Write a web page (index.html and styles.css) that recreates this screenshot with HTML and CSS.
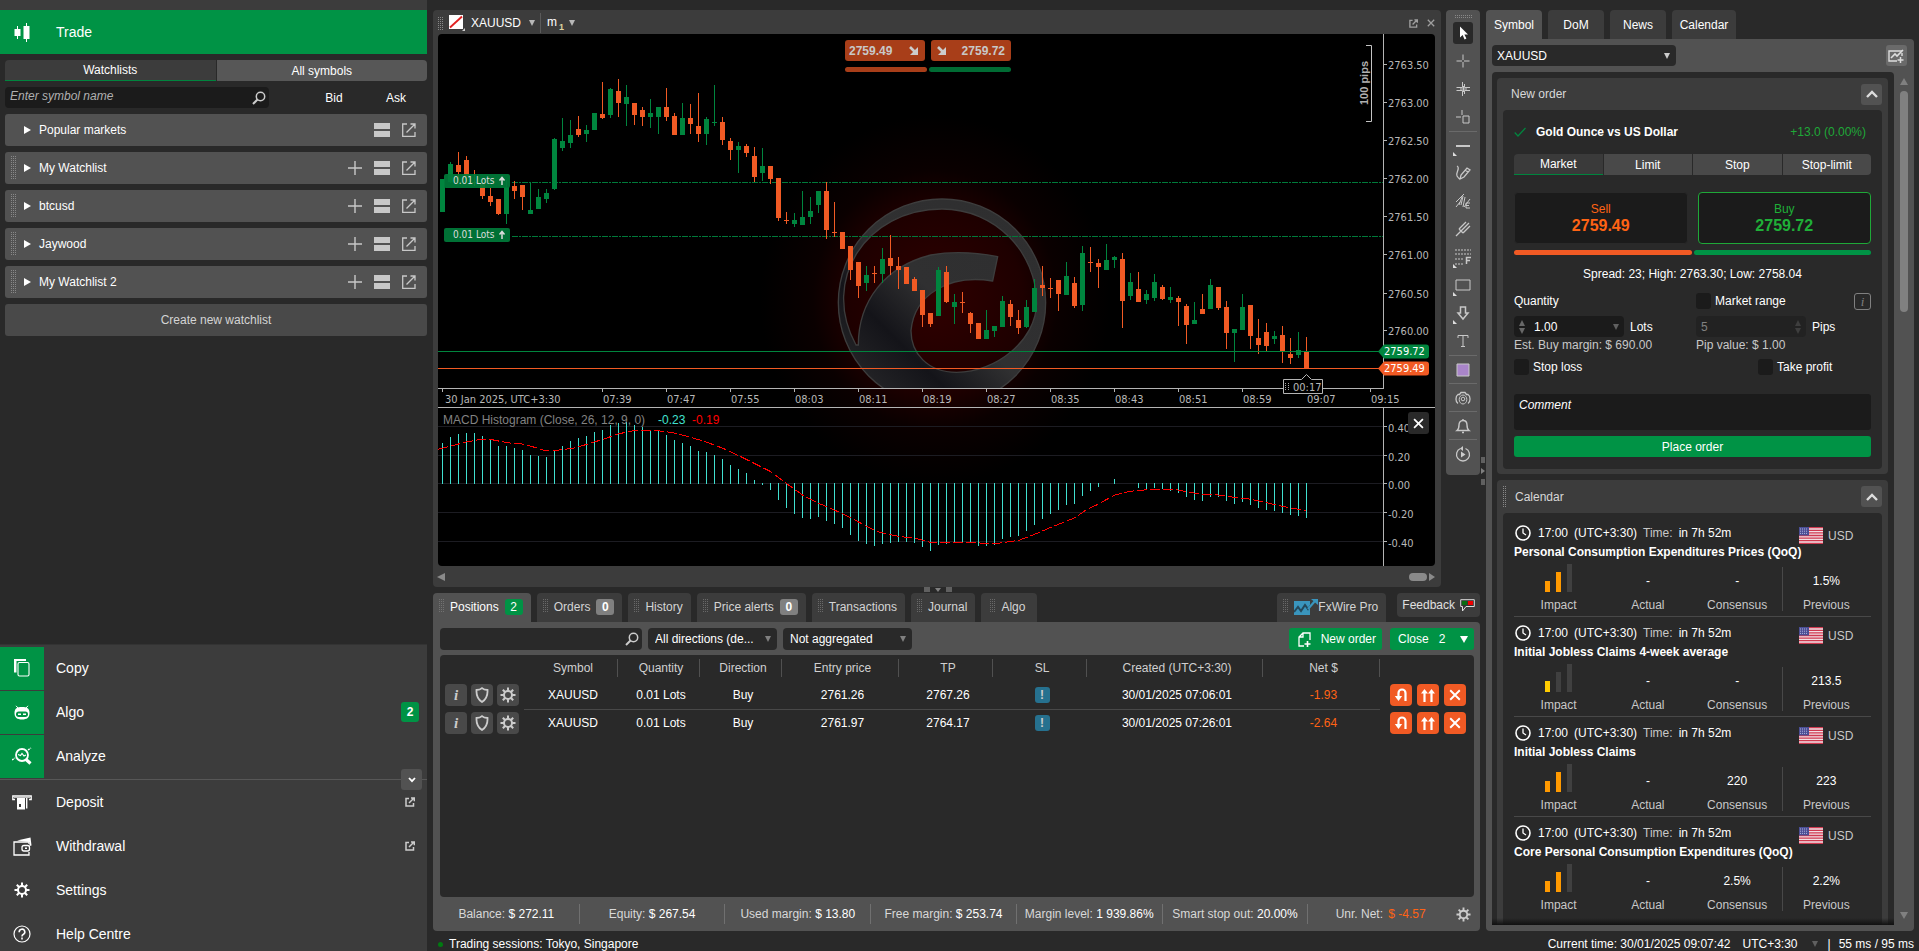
FILE: index.html
```html
<!DOCTYPE html>
<html lang="en">
<head>
<meta charset="utf-8">
<title>Trade</title>
<link rel="stylesheet" href="styles.css">
</head>
<body>
<svg class="defs" aria-hidden="true">
  <symbol id="i-search" viewBox="0 0 14 14"><circle cx="8.500" cy="5.500" r="4.200" fill="none" stroke="currentColor" stroke-width="1.500"/><path d="M5.500 8.500 1 13" stroke="currentColor" stroke-width="2"/></symbol>
  <symbol id="i-plus" viewBox="0 0 14 14"><path d="M7 0v14M0 7h14" stroke="currentColor" stroke-width="1.400"/></symbol>
  <symbol id="i-rows" viewBox="0 0 16 14"><path d="M0 0h16v6H0zM0 8h16v6H0z" fill="currentColor"/></symbol>
  <symbol id="i-out" viewBox="0 0 14 14"><path d="M5 1H.7v12.300H13V9M4.500 9.500 12.500 1.500M8.500 1H13v4.500" fill="none" stroke="currentColor" stroke-width="1.300"/></symbol>
  <symbol id="i-ext" viewBox="0 0 10 10"><path d="M4 1.500H1v7.500h7.500V6M4 6 8.500 1.500M6 1h3.300v3.300" fill="none" stroke="currentColor" stroke-width="1.500"/></symbol>
  <symbol id="i-x" viewBox="0 0 10 10"><path d="M1 1l8 8M9 1 1 9" stroke="currentColor" stroke-width="1.600" fill="none"/></symbol>
  <symbol id="i-up" viewBox="0 0 12 8"><path d="M1 7 6 2l5 5" fill="none" stroke="currentColor" stroke-width="2.400"/></symbol>
  <symbol id="i-gear" viewBox="0 0 16 16"><path d="M8 .5v15M.5 8h15M2.800 2.800l10.400 10.400M13.200 2.800 2.800 13.200" stroke="currentColor" stroke-width="2"/><circle cx="8" cy="8" r="4" fill="var(--hole,#3c3c3c)" stroke="currentColor" stroke-width="2"/></symbol>
  <symbol id="i-shield" viewBox="0 0 14 16"><path d="M7 1.200C5.500 2.600 3.500 3 1.500 3c-.3 5 .8 9 5.500 12 4.700-3 5.800-7 5.500-12-2 0-4-.4-5.500-1.800z" fill="none" stroke="currentColor" stroke-width="1.800"/></symbol>
  <symbol id="i-uturn" viewBox="0 0 14 14"><path d="M11.500 13V5a3.500 3.500 0 0 0-7 0v5" fill="none" stroke="currentColor" stroke-width="2.200"/><path d="M.8 8h7.400l-3.700 5z" fill="currentColor"/></symbol>
  <symbol id="i-upup" viewBox="0 0 14 14"><path d="M3.500 14V4M10.500 14V4" stroke="currentColor" stroke-width="2.200"/><path d="M0 5.500 3.500 1 7 5.500zM7 5.500 10.500 1 14 5.500z" fill="currentColor"/></symbol>
  <symbol id="i-clock" viewBox="0 0 16 16"><circle cx="8" cy="8" r="7" fill="none" stroke="currentColor" stroke-width="1.600"/><path d="M8 3.500V8l3 2" fill="none" stroke="currentColor" stroke-width="1.300"/></symbol>
  <symbol id="i-flag" viewBox="0 0 24 17"><path fill="#f1dfe3" d="M0 0h24v17H0z"/><path d="M0 .7h24M0 3.300h24M0 5.900h24M0 8.500h24M0 11.100h24M0 13.700h24M0 16.300h24" stroke="#cf3a50" stroke-width="1.300"/><path fill="#4a4e94" d="M0 0h10v8.500H0z"/><path d="M1 2h8M1 4.200h8M1 6.400h8" stroke="#aeb2dc" stroke-dasharray="1 1"/></symbol>
</svg>

<aside class="sidebar">
  <div class="trade-head">
    <svg width="16" height="20" viewBox="0 0 16 20"><path d="M3.500 4v13M12.500 1v19" stroke="#fff"/><path d="M.5 7h6v7h-6zM9.500 4h6v13h-6z" fill="#fff"/></svg>
    <span>Trade</span>
  </div>
  <div class="watch">
    <div class="seg"><button class="on">Watchlists</button><button>All symbols</button></div>
    <div class="find">
      <label class="find-box"><input type="text" placeholder="Enter symbol name" aria-label="Enter symbol name"><svg width="14" height="14"><use href="#i-search"/></svg></label>
      <span>Bid</span><span>Ask</span>
    </div>
    <div class="wl"><i class="tri"></i><b>Popular markets</b><button aria-label="View"><svg width="16" height="14"><use href="#i-rows"/></svg></button><button aria-label="Detach"><svg width="14" height="14"><use href="#i-out"/></svg></button></div>
    <div class="wl grip-row"><i class="tri"></i><b>My Watchlist</b><button aria-label="Add"><svg width="14" height="14"><use href="#i-plus"/></svg></button><button aria-label="View"><svg width="16" height="14"><use href="#i-rows"/></svg></button><button aria-label="Detach"><svg width="14" height="14"><use href="#i-out"/></svg></button></div>
    <div class="wl grip-row"><i class="tri"></i><b>btcusd</b><button aria-label="Add"><svg width="14" height="14"><use href="#i-plus"/></svg></button><button aria-label="View"><svg width="16" height="14"><use href="#i-rows"/></svg></button><button aria-label="Detach"><svg width="14" height="14"><use href="#i-out"/></svg></button></div>
    <div class="wl grip-row"><i class="tri"></i><b>Jaywood</b><button aria-label="Add"><svg width="14" height="14"><use href="#i-plus"/></svg></button><button aria-label="View"><svg width="16" height="14"><use href="#i-rows"/></svg></button><button aria-label="Detach"><svg width="14" height="14"><use href="#i-out"/></svg></button></div>
    <div class="wl grip-row"><i class="tri"></i><b>My Watchlist 2</b><button aria-label="Add"><svg width="14" height="14"><use href="#i-plus"/></svg></button><button aria-label="View"><svg width="16" height="14"><use href="#i-rows"/></svg></button><button aria-label="Detach"><svg width="14" height="14"><use href="#i-out"/></svg></button></div>
    <button class="create">Create new watchlist</button>
  </div>
  <nav class="nav">
    <a href="#copy" class="app"><span class="ic"><svg width="16" height="18" viewBox="0 0 16 18"><path d="M0 13.500V0h12v2H2.500v11.500z" fill="#fff"/><rect x="4" y="3.500" width="11" height="13.500" rx="1.500" fill="none" stroke="#fff" stroke-width="1.100"/></svg></span>Copy</a>
    <a href="#algo" class="app"><span class="ic"><svg width="16" height="15" viewBox="0 0 16 15"><path d="M2 .8 4 3M14 .8 12 3" stroke="#fff"/><path d="M8 2c5 0 7.500 1.500 7.500 6S13 14.500 8 14.500.5 12.500.5 8 3 2 8 2z" fill="#fff"/><rect x="2" y="6.500" width="12" height="5.500" rx="2.700" fill="#009345"/><path d="M4 9.200h3M9 9.200h3" stroke="#fff" stroke-width="1.400"/></svg></span>Algo<em class="badge">2</em></a>
    <a href="#analyze" class="app"><span class="ic"><svg width="20" height="18" viewBox="0 0 20 18"><circle cx="10" cy="8" r="6" fill="none" stroke="#fff" stroke-width="1.800"/><path d="M13.500 12l5 4.500" stroke="#fff" stroke-width="3.200"/><path d="M6 7.500l2.500 1 1.500-2 2 2.500 2-1" fill="none" stroke="#fff" stroke-width="1.200"/><path d="M0 13l3-2M16 3l3-2" stroke="#fff" stroke-width="1.400" stroke-dasharray="2 1"/></svg></span>Analyze</a>
    <div class="split"><button aria-label="Collapse menu"><svg width="8" height="6" viewBox="0 0 8 6"><path d="M1 1l3 3.200L7 1" fill="none" stroke="#fff" stroke-width="1.800"/></svg></button></div>
    <a href="#deposit"><span class="ic"><svg width="20" height="15" viewBox="0 0 20 15"><path d="M3 4.500H.8V1h18.400v3.500H17" fill="none" stroke="#fff" stroke-width="1.300"/><path d="M2 2.500h16" stroke="#bbb"/><path d="M5 3h8v11.500H5zM14 3h1.400v10.500H14z" fill="#fff"/><path d="M7 9h2v3H7z" fill="#3c3c3c"/></svg></span>Deposit<svg class="ext" width="10" height="10"><use href="#i-ext"/></svg></a>
    <a href="#withdrawal"><span class="ic"><svg width="19" height="19" viewBox="0 0 19 19"><path d="M4 3.500 17.500.5l1 8-2 .5V5z" fill="#fff"/><path d="M16 7V5H1v13h15v-3" fill="none" stroke="#fff" stroke-width="1.300"/><rect x="9" y="8.500" width="7.500" height="5.500" rx="2" fill="none" stroke="#fff" stroke-width="1.300"/><path d="M12 10.500h2v1.500h-2z" fill="#fff"/></svg></span>Withdrawal<svg class="ext" width="10" height="10"><use href="#i-ext"/></svg></a>
    <a href="#settings"><span class="ic"><svg width="16" height="16"><use href="#i-gear"/></svg></span>Settings</a>
    <a href="#help"><span class="ic"><svg width="18" height="18" viewBox="0 0 18 18"><circle cx="9" cy="9" r="8" fill="none" stroke="#fff" stroke-width="1.200"/><path d="M6.200 7.200a2.800 2.800 0 1 1 4 2.300c-.9.500-1.200.9-1.200 1.900M9 12.500v2" fill="none" stroke="#fff" stroke-width="1.600"/></svg></span>Help Centre</a>
  </nav>
</aside>

<div class="content">
  <div class="workspace">
    <main class="center">
      <div class="chart-row">
        <section class="chart-panel">
          <header class="chart-head">
            <i class="grip"></i>
            <button class="sym"><svg width="16" height="16" viewBox="0 0 16 16"><path fill="#fff" d="M0 0h14v14H0z"/><path d="M1 12.500 13 1.500" stroke="#e02020" stroke-width="1.800"/><path d="M16 13v3h-3z" fill="#ccc"/></svg>XAUUSD<i class="caret"></i></button>
            <button class="tf"><span>m</span><sub>1</sub><i class="caret"></i></button>
            <span class="grow"></span>
            <button class="dim" aria-label="Detach chart"><svg width="9" height="9"><use href="#i-ext"/></svg></button>
            <button class="dim" aria-label="Close chart"><svg width="8" height="8"><use href="#i-x"/></svg></button>
          </header>
          <div class="chart">
            <svg id="plot" viewBox="438 34 997 532" role="img" aria-label="XAUUSD one minute chart">
              <defs>
                <radialGradient id="glow"><stop offset="0" stop-color="#300000"/><stop offset=".5" stop-color="#1e0000"/><stop offset=".7" stop-color="#0a0000"/><stop offset="1" stop-color="#000"/></radialGradient>
                <linearGradient id="metal" x1="0" y1="1" x2="1" y2="0"><stop offset="0" stop-color="#2f2f30"/><stop offset=".3" stop-color="#141419"/><stop offset=".5" stop-color="#303031"/><stop offset="1" stop-color="#2e2e2f"/></linearGradient>
                <clipPath id="clipTop"><path d="M438 34h945v354H438z"/></clipPath>
              </defs>
              <ellipse cx="935" cy="300" rx="175" ry="185" fill="url(#glow)"/>
              <g clip-path="url(#clipTop)">
                <g transform="translate(800 180) scale(.3333)">
                  <path fill="url(#metal)" stroke="#3d3d3d" stroke-width="4" fill-rule="evenodd" d="M115 368a311 311 0 1 1 622 0a311 311 0 1 1-622 0zM168 495C60 300 200 87 426 87c160 0 284 130 284 283-2 110-120 207-240 207-90 0-137-60-137-125 10-110 115-170 245-149l15-73c-60-12-130-18-200-5-140 35-218 140-218 270z"/>
                </g>
              </g>
              <g stroke="#1c1c22" shape-rendering="crispEdges"><path d="M438 426.500h945M438 455.500h945M438 483.500h945M438 512.500h945M438 541.500h945"/></g>
              <g stroke="#007a3a" stroke-dasharray="6 1 2 1" shape-rendering="crispEdges"><path d="M512 182.500h871M512 236.500h871"/></g>
              <g id="candles" shape-rendering="crispEdges"></g>
              <g id="macd" fill="#40e0d0" shape-rendering="crispEdges"></g>
              <path id="signal" fill="none" stroke="#f00" stroke-dasharray="10 3" shape-rendering="crispEdges"/>
              <g shape-rendering="crispEdges">
                <path d="M438 351.500h942" stroke="#00853e"/><path d="M438 368.500h942" stroke="#f15a24"/>
                <path d="M438 388.500h945.500V34M438 407.500h997M1383.500 408v158" fill="none" stroke="#b4b4b4"/>
              </g>
              <g id="axis" fill="#b4b4b4" stroke="#b4b4b4"></g>
              <path d="M1366 45.500h5.500v76h-5.500" fill="none" stroke="#c4c4c4"/>
              <text class="pips" transform="translate(1368 83) rotate(-90)" text-anchor="middle">100 pips</text>
              <g fill="#007b3a" fill-opacity=".92"><rect x="444" y="174" width="66" height="14" rx="2"/><rect x="444" y="228" width="66" height="14" rx="2"/></g>
              <g class="lots"><text x="453" y="184">0.01 Lots</text><text x="453" y="238">0.01 Lots</text></g>
              <path d="M502 185v-7M499.500 180.500l2.500-3 2.500 3M502 239v-7M499.500 234.500l2.500-3 2.500 3" fill="none" stroke="#ddd" stroke-width="1.500"/>
              <path d="M1378 351.500l6-7h42q3 0 3 3v8q0 3-3 3h-42z" fill="#00853e"/>
              <path d="M1378 368.500l6-7h42q3 0 3 3v8q0 3-3 3h-42z" fill="#f15a24"/>
              <text class="tag" x="1384" y="355">2759.72</text><text class="tag" x="1384" y="372">2759.49</text>
              <path d="M1283.500 379.500h18l5-5 5 5h11v14h-39z" fill="#000" stroke="#b4b4b4"/>
              <path d="M1285.500 383v8M1288.500 383v8" stroke="#aaa" stroke-dasharray="1 1"/>
              <text class="ax" x="1293" y="391">00:17</text>
              <g class="ind"><text x="443" y="424" fill="#828282">MACD Histogram (Close, 26, 12, 9, 0)</text><text x="658" y="424" fill="#40e0d0">-0.23</text><text x="692" y="424" fill="#f00">-0.19</text></g>
            </svg>
            <div class="quick">
              <button>2759.49<svg width="9" height="9" viewBox="0 0 9 9"><path d="M1 1l5 5" stroke="#ccc" stroke-width="2.600"/><path d="M9 1v8H1z" fill="#ccc"/></svg></button>
              <button><svg width="9" height="9" viewBox="0 0 9 9"><path d="M1 1l5 5" stroke="#ccc" stroke-width="2.600"/><path d="M9 1v8H1z" fill="#ccc"/></svg>2759.72</button>
              <i class="sellbar"></i><i class="buybar"></i>
            </div>
            <button class="ind-close" aria-label="Remove indicator"><svg width="11" height="11"><use href="#i-x"/></svg></button>
          </div>
          <div class="hscroll"><i class="back"></i><span class="grow"></span><i class="thumb"></i><i class="fwd"></i></div>
          <div class="splitter"><i></i><b></b><i></i></div>
        </section>
        <aside class="tools">
          <i class="hgrip"></i>
          <button class="on" aria-label="Pointer"><svg viewBox="0 0 16 16"><path d="M5 1.500v11l2.600-2.400 2 4.400 1.800-.9-2-4.200H13z" fill="#fff"/></svg></button>
          <button aria-label="Crosshair"><svg viewBox="0 0 16 16"><path d="M8 1.500V7M8 9v5.500M1.500 8H7M9 8h5.500"/></svg></button>
          <button aria-label="Synced crosshair"><svg viewBox="0 0 16 16"><path d="M7.500 1v5.500H1.500M7.500 15V9.500H1.500M9.500 3v3.500h5.500M9.500 13V9.500h5.500M8.500 5v6M5 8h7"/></svg></button>
          <button aria-label="Magnet"><svg viewBox="0 0 16 16"><path d="M7 1v5M1 8h5M8 7h6v7H8z"/></svg></button>
          <button class="sep more" aria-label="Line"><svg viewBox="0 0 16 16"><path d="M1 8h14" stroke-width="2"/></svg></button>
          <button aria-label="Pencil"><svg viewBox="0 0 16 16"><path d="M2 1c4 2-2 7 0 10s2 3 3 3M5 14l1-4 6-7 3 2-6 7zM10 5l3 2" stroke-width="1.300"/></svg></button>
          <button aria-label="Elliott waves"><svg viewBox="0 0 16 16"><path d="M1 9 9 1M1 14l4-5M4 12l3-8M6 12l2-9M8 14l2-10M9 14l6-8M11 10h4M11 10v5h4M11 12.500h3"/></svg></button>
          <button aria-label="Pitchfork"><svg viewBox="0 0 16 16"><path d="M1 15l5-5M4 8l7-7M6 10l8-8M8 12l7-7M4 8l4 4" stroke-width="1.300"/></svg></button>
          <button class="more" aria-label="Fibonacci"><svg viewBox="0 0 16 16"><path d="M0 1h16M0 5h16M0 10h9M0 15h9" stroke-dasharray="2 1"/><path d="M11.500 15V8.500H16M11.500 11.500H15" stroke-width="1.500"/></svg></button>
          <button class="more" aria-label="Rectangle"><svg viewBox="0 0 16 16"><path d="M1 3h14v10H1z"/></svg></button>
          <button class="more" aria-label="Arrow"><svg viewBox="0 0 16 16"><path d="M5.500 2h5v6H13l-5 6-5-6h2.500z" stroke-width="1.500"/></svg></button>
          <button aria-label="Text"><svg viewBox="0 0 16 16"><path d="M3 5V2.500h10V5M8 2.500v11M6 13.500h4"/></svg></button>
          <button class="sep" aria-label="Colour"><svg viewBox="0 0 16 16"><path d="M2 2h12v12H2z" fill="#a985c9"/></svg></button>
          <button class="sep" aria-label="Snapshot"><svg viewBox="0 0 16 16"><path d="M3 13.500C.3 12 .3 6 3 4.500h1.500L6 2.500h4l1.500 2H13c2.700 1.500 2.700 7.500 0 9" stroke-width="1.300"/><ellipse cx="8" cy="9.500" rx="3.800" ry="4.500"/><circle cx="8" cy="9" r="1.800"/></svg></button>
          <button class="sep" aria-label="Alert"><svg viewBox="0 0 16 16"><path d="M8 1v1.500M2 12.500c2-1.500 2-3 2-5.500s1.500-4.500 4-4.500S12 4.500 12 7s0 4 2 5.500zM7 14.500h2" stroke-width="1.400"/></svg></button>
          <button class="sep" aria-label="Replay"><svg viewBox="0 0 16 16"><path d="M5.500 2.500A6.500 6.500 0 1 0 10.500 2.500" stroke-width="1.300"/><path d="M6 5.500v6l4.500-3zM8 0v5L5 2.500z" fill="#ccc" stroke="none"/></svg></button>
        </aside>
      </div>

      <section class="trades">
        <div class="tabs">
          <button class="tab on"><i class="grip"></i>Positions<em>2</em></button>
          <button class="tab"><i class="grip"></i>Orders<em>0</em></button>
          <button class="tab"><i class="grip"></i>History</button>
          <button class="tab"><i class="grip"></i>Price alerts<em>0</em></button>
          <button class="tab"><i class="grip"></i>Transactions</button>
          <button class="tab"><i class="grip"></i>Journal</button>
          <button class="tab wide"><i class="grip"></i>Algo</button>
          <span class="grow"></span>
          <button class="tab fx"><i class="grip"></i><svg width="24" height="16" viewBox="0 0 24 16"><path fill="#3a95bd" d="M0 2h16v14H0z"/><path d="M0 13l4-5 3 4 4-6 3 4 6-8" fill="none" stroke="#24485a" stroke-width="2"/><path d="M14 10l7-8" stroke="#3a95bd" stroke-width="2"/><path d="M17 0h7v6z" fill="#3a95bd"/></svg>FxWire Pro</button>
          <button class="feedback">Feedback<svg width="15" height="13" viewBox="0 0 15 13"><path d="M.7.700h13.600v6.800H6L2.500 12V7.500H.7z" fill="#333" stroke="#ddd"/><path fill="#0a6b10" d="M2 2h5v4H2z"/><path fill="#e00" d="M8 2h5v4H8z"/></svg></button>
        </div>
        <div class="trades-body">
          <div class="filters">
            <label class="dark-search"><input type="text" aria-label="Search positions"><svg width="14" height="14"><use href="#i-search"/></svg></label>
            <span class="sel"><select aria-label="Direction"><option>All directions (de...</option></select></span>
            <span class="sel"><select aria-label="Aggregation"><option>Not aggregated</option></select></span>
            <span class="grow"></span>
            <button class="green"><svg width="13" height="15" viewBox="0 0 13 15"><path d="M6 14H1V5l4-4h7v7M1 5h4V1" fill="none" stroke="#fff" stroke-width="1.300"/><path d="M9.500 9v6M6.500 12h6" stroke="#fff" stroke-width="1.600"/></svg>New order</button>
            <button class="green close"><span>Close</span><span>2</span><i class="caret"></i></button>
          </div>
          <div class="grid-box">
            <table>
              <colgroup><col class="c84"><col class="c94"><col class="c82"><col class="c82"><col class="c117"><col class="c94"><col class="c94"><col class="c176"><col class="c117"><col class="c94"></colgroup>
              <thead><tr><th class="nosep"></th><th>Symbol</th><th>Quantity</th><th>Direction</th><th>Entry price</th><th>TP</th><th>SL</th><th>Created (UTC+3:30)</th><th>Net $</th><th class="nosep"></th></tr></thead>
              <tbody>
                <tr><td><div class="acts"><button class="inf">i</button><button aria-label="Protect"><svg width="14" height="16"><use href="#i-shield"/></svg></button><button aria-label="Modify"><svg width="16" height="16"><use href="#i-gear"/></svg></button></div></td><td>XAUUSD</td><td>0.01 Lots</td><td>Buy</td><td>2761.26</td><td>2767.26</td><td><span class="warn">!</span></td><td>30/01/2025 07:06:01</td><td class="neg">-1.93</td><td><div class="acts red"><button aria-label="Reverse"><svg width="14" height="14"><use href="#i-uturn"/></svg></button><button aria-label="Double"><svg width="14" height="14"><use href="#i-upup"/></svg></button><button aria-label="Close"><svg width="12" height="12"><use href="#i-x"/></svg></button></div></td></tr>
                <tr><td><div class="acts"><button class="inf">i</button><button aria-label="Protect"><svg width="14" height="16"><use href="#i-shield"/></svg></button><button aria-label="Modify"><svg width="16" height="16"><use href="#i-gear"/></svg></button></div></td><td>XAUUSD</td><td>0.01 Lots</td><td>Buy</td><td>2761.97</td><td>2764.17</td><td><span class="warn">!</span></td><td>30/01/2025 07:26:01</td><td class="neg">-2.64</td><td><div class="acts red"><button aria-label="Reverse"><svg width="14" height="14"><use href="#i-uturn"/></svg></button><button aria-label="Double"><svg width="14" height="14"><use href="#i-upup"/></svg></button><button aria-label="Close"><svg width="12" height="12"><use href="#i-x"/></svg></button></div></td></tr>
              </tbody>
            </table>
          </div>
          <div class="account">
            <span>Balance: <b>$ 272.11</b></span><span>Equity: <b>$ 267.54</b></span><span>Used margin: <b>$ 13.80</b></span><span>Free margin: <b>$ 253.74</b></span><span>Margin level: <b>1 939.86%</b></span><span>Smart stop out: <b>20.00%</b></span><span>Unr. Net: <b class="neg">$ -4.57</b></span>
            <button aria-label="Account settings"><svg width="15" height="15"><use href="#i-gear"/></svg></button>
          </div>
        </div>
      </section>
    </main>

    <aside class="right">
      <div class="collapse"><i></i><b></b><i></i></div>
      <div class="rtabs"><button class="on">Symbol</button><button>DoM</button><button>News</button><button class="w">Calendar</button></div>
      <div class="rbody">
        <div class="rhead">
          <span class="sel big"><select aria-label="Symbol"><option>XAUUSD</option></select></span>
          <button aria-label="Add chart"><svg width="17" height="14" viewBox="0 0 17 14"><path d="M14 2H1v10h8M1 12l0 0M14 4v3" fill="none" stroke="#ddd" stroke-width="1.400"/><path d="M3 9l4-4 2 2 6-6" fill="none" stroke="#ddd" stroke-width="1.600"/><path d="M12.500 8v6M9.500 11h6" stroke="#ddd" stroke-width="1.500"/></svg></button>
        </div>
        <div class="rscroll">
          <div class="rlist">
            <section class="card">
              <header><h2>New order</h2><button aria-label="Collapse"><svg width="12" height="8"><use href="#i-up"/></svg></button></header>
              <form class="inner">
                <div class="name"><svg width="12" height="10" viewBox="0 0 12 10"><path d="M.7 5.500 4 9l7.500-8" fill="none" stroke="#00853e" stroke-width="1.200"/></svg><strong>Gold Ounce vs US Dollar</strong><span>+13.0 (0.00%)</span></div>
                <div class="modes"><button type="button" class="on">Market</button><button type="button">Limit</button><button type="button">Stop</button><button type="button">Stop-limit</button></div>
                <div class="prices"><button type="button" class="sell">Sell<b>2759.49</b></button><button type="button" class="buy">Buy<b>2759.72</b></button></div>
                <div class="depth"><i></i><i></i></div>
                <p class="spread">Spread: 23; High: 2763.30; Low: 2758.04</p>
                <div class="row two"><label for="qty">Quantity</label><div class="mr"><input type="checkbox" id="mr"><label for="mr">Market range</label><button type="button" class="info">i</button></div></div>
                <div class="row two fields">
                  <div><span class="num"><i class="spin"></i><input id="qty" type="text" value="1.00"><i class="caret"></i></span>Lots</div>
                  <div><span class="num off"><input id="rng" type="text" value="5" aria-label="Range" disabled><i class="spin"></i></span><label for="rng">Pips</label></div>
                </div>
                <div class="row two soft"><span>Est. Buy margin: $ 690.00</span><span>Pip value: $ 1.00</span></div>
                <div class="row stops"><div><input type="checkbox" id="sl"><label for="sl">Stop loss</label></div><div><input type="checkbox" id="tp"><label for="tp">Take profit</label></div></div>
                <textarea placeholder="Comment" aria-label="Comment"></textarea>
                <button type="button" class="place">Place order</button>
              </form>
            </section>
            <section class="card cal">
              <header><i class="grip"></i><h2>Calendar</h2><button aria-label="Collapse"><svg width="12" height="8"><use href="#i-up"/></svg></button></header>
              <div class="inner" id="events">
                <article class="ev"><div class="when"><svg width="16" height="16"><use href="#i-clock"/></svg><span>17:00</span><span>(UTC+3:30)</span><span class="t">Time:</span><span>in 7h 52m</span><span class="cur"><svg width="24" height="17"><use href="#i-flag"/></svg>USD</span></div><h3>Personal Consumption Expenditures Prices (QoQ)</h3><div class="cells"><div><div class="v bars mid"><i></i><i></i><i></i></div>Impact</div><div><div class="v">-</div>Actual</div><div><div class="v">-</div>Consensus</div><div><div class="v">1.5%</div>Previous</div></div></article>
                <article class="ev"><div class="when"><svg width="16" height="16"><use href="#i-clock"/></svg><span>17:00</span><span>(UTC+3:30)</span><span class="t">Time:</span><span>in 7h 52m</span><span class="cur"><svg width="24" height="17"><use href="#i-flag"/></svg>USD</span></div><h3>Initial Jobless Claims 4-week average</h3><div class="cells"><div><div class="v bars low"><i></i><i></i><i></i></div>Impact</div><div><div class="v">-</div>Actual</div><div><div class="v">-</div>Consensus</div><div><div class="v">213.5</div>Previous</div></div></article>
                <article class="ev"><div class="when"><svg width="16" height="16"><use href="#i-clock"/></svg><span>17:00</span><span>(UTC+3:30)</span><span class="t">Time:</span><span>in 7h 52m</span><span class="cur"><svg width="24" height="17"><use href="#i-flag"/></svg>USD</span></div><h3>Initial Jobless Claims</h3><div class="cells"><div><div class="v bars mid"><i></i><i></i><i></i></div>Impact</div><div><div class="v">-</div>Actual</div><div><div class="v">220</div>Consensus</div><div><div class="v">223</div>Previous</div></div></article>
                <article class="ev last"><div class="when"><svg width="16" height="16"><use href="#i-clock"/></svg><span>17:00</span><span>(UTC+3:30)</span><span class="t">Time:</span><span>in 7h 52m</span><span class="cur"><svg width="24" height="17"><use href="#i-flag"/></svg>USD</span></div><h3>Core Personal Consumption Expenditures (QoQ)</h3><div class="cells"><div><div class="v bars mid"><i></i><i></i><i></i></div>Impact</div><div><div class="v">-</div>Actual</div><div><div class="v">2.5%</div>Consensus</div><div><div class="v">2.2%</div>Previous</div></div></article>
              </div>
            </section>
          </div>
          <div class="vscroll"><i class="up"></i><i class="thumb"></i><i class="down"></i></div>
        </div>
      </div>
    </aside>
  </div>
  <footer class="foot"><i class="dot"></i><span>Trading sessions: Tokyo, Singapore</span><span class="grow"></span><span>Current time: 30/01/2025 09:07:42</span><span class="tz">UTC+3:30</span><i class="caret"></i><span class="bar">|</span><span>55 ms / 95 ms</span></footer>
</div>
<script src="chart.js"></script>
</body>
</html>
```
FILE: chart.js
```js
// Levels are stored in ticks, three ticks per chart unit.
// Each candle: high, body top, body bottom, low, and 1 for rising or 0 for falling.
const candles = [
[537,537,636,636,1],[486,491,547,550,1],[456,495,516,540,0],[468,480,528,540,0],[510,546,549,558,0],
[550,552,588,597,0],[564,588,606,618,0],[597,597,642,645,0],[540,560,642,672,1],[543,558,573,597,0],
[555,555,591,630,0],[549,630,642,642,1],[567,591,627,627,1],[567,579,597,609,1],[414,417,567,570,1],
[354,423,444,453,1],[360,405,429,444,1],[348,387,405,411,0],[375,390,402,426,1],[339,339,390,390,1],
[246,342,354,357,0],[264,267,345,354,1],[237,273,309,351,0],[255,291,312,378,1],[309,309,345,375,0],
[321,330,351,378,0],[297,339,351,384,1],[321,321,351,402,1],[264,321,351,363,0],[339,348,405,405,0],
[309,354,405,405,1],[312,354,372,402,0],[279,378,402,426,0],[351,357,402,435,1],[255,366,369,378,1],
[351,366,420,435,0],[414,423,450,480,0],[426,438,450,519,1],[432,438,459,471,0],[441,468,531,546,0],
[444,498,519,543,1],[498,498,537,552,0],[534,534,654,663,0],[636,660,663,672,0],[639,660,672,681,1],
[573,651,675,675,1],[591,633,651,672,1],[573,573,615,639,1],[546,573,690,717,0],[606,696,699,711,0],
[696,696,747,747,0],[738,738,810,840,0],[786,786,858,894,0],[798,825,849,873,1],[798,819,822,849,0],
[744,777,822,849,1],[705,774,798,825,0],[771,798,810,867,0],[801,801,852,852,0],[831,837,873,873,0],
[870,870,945,981,0],[939,939,972,981,0],[801,810,948,948,1],[798,816,906,908,0],[882,906,920,971,1],
[877,906,909,938,0],[936,939,971,998,0],[969,969,1017,1017,0],[930,990,1017,1017,1],[978,978,993,1010,1],
[888,903,980,980,1],[900,912,950,978,0],[930,960,984,1001,0],[900,921,980,983,1],[837,864,935,935,1],
[798,855,864,888,0],[834,864,867,894,0],[840,840,882,933,0],[786,828,885,885,1],[831,849,918,923,0],
[738,759,915,933,1],[741,786,789,816,0],[777,789,801,864,0],[732,780,809,809,1],[768,771,780,804,1],
[759,777,903,984,0],[819,846,888,900,1],[816,867,906,906,0],[870,882,900,912,1],[822,846,894,903,1],
[855,861,897,900,0],[861,891,900,909,1],[888,894,906,978,0],[912,918,975,1032,0],[906,960,971,971,1],
[882,927,941,941,0],[837,855,927,927,1],[861,861,924,930,0],[903,921,999,1047,0],[987,987,999,1086,1],
[882,921,990,990,1],[915,915,1008,1047,0],[957,1014,1035,1062,0],[969,996,1038,1053,0],[993,1008,1018,1032,1],
[978,1005,1054,1089,0],[1014,1062,1074,1092,0],[996,1050,1064,1074,1],[1011,1056,1105,1105,0]];

// End of each histogram bar in ticks; the zero line is at 311.
const macd = [189,171,162,159,159,168,180,198,198,204,210,225,228,231,213,198,183,174,168,156,150,135,129,126,135,
141,150,153,165,180,189,198,213,216,225,237,255,267,279,300,315,330,360,384,402,414,417,411,423,432,444,465,483,
492,498,492,489,486,486,489,501,513,495,492,486,489,487,498,498,495,477,471,468,453,435,417,402,390,375,372,348,
333,321,311,297,311,311,324,327,324,327,333,339,351,360,363,351,351,363,372,366,375,384,390,393,399,405,408,414];

const signal = [[438,208],[450,199],[466,186],[483,177],[492,179],[507,188],[525,193],[543,210],[554,212],[573,205],
[588,192],[603,178],[618,162],[633,152],[658,152],[673,158],[690,171],[707,187],[723,205],[740,229],[753,248],
[770,274],[790,318],[803,346],[818,369],[835,391],[852,415],[867,440],[880,457],[897,468],[917,476],[932,488],
[970,487],[984,490],[998,490],[1019,481],[1037,460],[1051,442],[1075,413],[1087,388],[1098,373],[1114,346],
[1130,334],[1144,330],[1162,327],[1176,329],[1201,343],[1216,344],[1234,352],[1248,356],[1262,365],[1284,380],[1306,392]];

const NS = 'http://www.w3.org/2000/svg';
const up = '#00853e', down = '#f15a24';
const px = ticks => Math.round(ticks / 3);

function add(parent, name, attrs, text) {
  const el = document.createElementNS(NS, name);
  for (const key in attrs) el.setAttribute(key, attrs[key]);
  if (text) el.textContent = text;
  parent.appendChild(el);
}

const candleLayer = document.getElementById('candles');
candles.forEach(([high, top, bottom, low, rising], i) => {
  const x = 440 + i * 8, fill = rising ? up : down;
  add(candleLayer, 'rect', { x: x + 2, y: px(high), width: 1, height: px(low) - px(high), fill });
  add(candleLayer, 'rect', { x, y: px(top), width: 5, height: Math.max(1, px(bottom) - px(top)), fill });
});

const macdLayer = document.getElementById('macd');
macd.forEach((end, i) => {
  if (end === 311) return;
  const y1 = Math.min(end, end < 311 ? end : 309), y2 = Math.max(end, 311);
  add(macdLayer, 'rect', { x: 442 + i * 8, y: 380 + px(y1), width: 1, height: px(y2) - px(y1) });
});

document.getElementById('signal').setAttribute('d',
  'M' + signal.map(([x, t]) => x + ' ' + (380 + t / 3).toFixed(1)).join('L'));

const axis = document.getElementById('axis');
const label = (x, y, text) => add(axis, 'text', { x, y, class: 'ax' }, text);
const tick = d => add(axis, 'path', { d, 'shape-rendering': 'crispEdges' });

for (let i = 0; i < 8; i++) {
  const y = 64 + i * 38 + (i > 5 ? 1 : 0);
  if (i === 7) { tick('M1384 330.5h3'); label(1388, 335, '2760.00'); continue; }
  tick(`M1384 ${y + .5}h3`);
  label(1388, y + 5, (2763.5 - i * .5).toFixed(2));
}
[['0.40', 426], ['0.20', 455], ['0.00', 483], ['-0.20', 512], ['-0.40', 541]].forEach(([text, y]) => {
  tick(`M1384 ${y + .5}h3`);
  label(1388, y + 6, text);
});
tick('M442.5 389v3');
label(445, 403, '30 Jan 2025, UTC+3:30');
for (let i = 0; i < 13; i++) {
  const x = 602 + i * 64, m = 39 + i * 8;
  if (i !== 11) tick(`M${x + .5} 389v3`);
  label(x + 1, 403, `${String(7 + Math.floor(m / 60)).padStart(2, '0')}:${String(m % 60).padStart(2, '0')}`);
}
```
FILE: styles.css
```css
* { box-sizing: border-box; }
html, body { height: 100%; }
body {
  margin: 0; display: flex; overflow: hidden; background: #292929; color: #fff;
  font: 12px/16px "Liberation Sans", Arial, sans-serif;
}
button, input, select, textarea { font: inherit; color: inherit; border: 0; padding: 0; margin: 0; background: none; }
button { display: flex; align-items: center; justify-content: center; }
input, textarea { outline: 0; min-width: 0; }
svg { flex: none; display: block; }
i, em { font-style: normal; }
b { font-weight: normal; }
a { color: inherit; text-decoration: none; }
h2, h3, p { margin: 0; font: inherit; }
.defs { position: absolute; width: 0; height: 0; }
.grow { flex: 1; }
.grip, .hgrip, .grip-row::before {
  background:
    repeating-linear-gradient(transparent 0 1px, var(--bg, #3c3c3c) 1px 2px),
    repeating-linear-gradient(90deg, #888 0 1px, transparent 1px 2px);
}
.grip { width: 5px; height: 13px; }
.caret { width: 0; height: 0; border: 3px solid transparent; border-top: 6px solid #b8b8b8; border-bottom: 0; }
.neg { color: #ff6314; }

/* sidebar */
.sidebar { width: 427px; flex: none; display: flex; flex-direction: column; border-top: 10px solid #3c3c3c; overflow: hidden; }
.trade-head { height: 44px; flex: none; display: flex; align-items: center; gap: 26px; padding-left: 14px; background: #009345; font-size: 14px; }
.watch { flex: 1; display: flex; flex-direction: column; gap: 6px; padding: 6px 0 0 5px; }
.seg { display: flex; gap: 1px; height: 21px; }
.seg button { flex: 1; background: #575757; border-radius: 0 4px 4px 0; }
.seg .on { background: #3c3c3c; border-bottom: 1px solid #00853e; border-radius: 4px 0 0 0; }
.find { display: flex; height: 21px; align-items: center; }
.find-box { width: 264px; height: 21px; display: flex; align-items: center; padding: 0 3px 0 5px; background: #1b1b1b; border-radius: 4px; color: #ccc; }
.find-box input { flex: 1; font-style: italic; height: 18px; align-self: flex-start; }
.find-box input::placeholder { color: #b0b0b0; opacity: 1; }
.find > span { width: 62px; text-align: center; }
.find > span:nth-child(2) { margin-left: 34px; }
.wl { --bg: #525252; height: 32px; display: flex; align-items: center; padding: 0 10px 0 19px; background: #525252; border-radius: 3px; position: relative; }
.wl b { flex: 1; }
.wl button { width: 16px; margin-left: 11px; color: #c8c8c8; }
.tri { border: 4px solid transparent; border-left: 7px solid #fff; border-right: 0; margin-right: 8px; }
.grip-row::before { content: ""; position: absolute; left: 6px; top: 4px; width: 5px; height: 24px; }
.create { height: 32px; background: #494949; border-radius: 3px; color: #d4d4d4; }
.nav { flex: none; background: #3c3c3c; padding-top: 1px; margin-bottom: -5px; font-size: 14px; border-top: 1px solid #333; }
.nav a { height: 44px; display: flex; align-items: center; padding-right: 12px; }
.ic { width: 44px; height: 44px; margin-right: 12px; display: flex; align-items: center; justify-content: center; }
.app .ic { background: #009345; height: 43px; }
.badge { margin: 0 -4px 0 auto; width: 18px; height: 20px; border-radius: 3px; background: #009345; font: bold 12px/20px "Liberation Sans", Arial, sans-serif; text-align: center; }
.ext { margin-left: auto; color: #ccc; }
.split { height: 2px; border-bottom: 1px solid #575757; position: relative; }
.split button { position: absolute; right: 5px; top: -9px; width: 21px; height: 21px; background: #525252; border-radius: 3px; }

/* frame */
.content { flex: 1; min-width: 0; display: flex; flex-direction: column; }
.workspace { flex: 1; min-height: 0; display: flex; gap: 6px; padding: 10px 5px 0 6px; }
.center { flex: 1; min-width: 0; display: flex; flex-direction: column; gap: 6px; }
.chart-row { flex: 1; min-height: 0; display: flex; gap: 5px; align-items: flex-start; }
.chart-panel { flex: 1; height: 100%; display: flex; flex-direction: column; background: #3c3c3c; border-radius: 4px; position: relative; }
.chart-head { height: 24px; flex: none; display: flex; align-items: center; padding: 2px 6px 0 5px; }
.chart-head button { height: 20px; }
.sym { gap: 6px; padding: 0 5px 0 6px; }
.sym .caret { margin-left: 2px; }
.tf { padding-left: 6px; border-left: 1px solid #5a5a5a; gap: 2px; }
.tf span { margin-top: -3px; }
.tf sub { font: bold 9px/10px "Liberation Sans", Arial, sans-serif; color: #ddd3a0; padding-top: 8px; }
.tf .caret { margin-left: 3px; }
.dim { color: #a0a0a0; margin-left: 9px; }
.chart { flex: 1; min-height: 0; margin: 0 6px 0 5px; background: #000; border-radius: 4px; position: relative; overflow: hidden; }
#plot { width: 100%; height: 100%; }
.ax { font: 11px "DejaVu Sans Condensed", "Noto Sans", sans-serif; stroke: none; fill: #b8b8b8; }
.tag { font: 11px "DejaVu Sans Condensed", "Noto Sans", sans-serif; fill: #fff; }
.lots { font: 10px "DejaVu Sans Condensed", "Noto Sans", sans-serif; fill: #dcdcdc; }
.pips { font: bold 11px "Liberation Sans", Arial, sans-serif; fill: #b0b0b0; }
.ind { font: 12px "Liberation Sans", Arial, sans-serif; }
.quick { position: absolute; top: 6px; left: 407px; width: 166px; display: grid; grid-template-columns: 1fr 1fr; column-gap: 6px; row-gap: 6px; }
.quick button { height: 21px; background: #a83e19; border-radius: 3px; color: #c8c8c8; font-weight: bold; justify-content: space-between; padding: 0 7px 0 4px; }
.quick button + button { padding: 0 6px 0 6px; }
.quick i { height: 5px; border-radius: 3px; }
.sellbar { background: #a83e19; margin-right: -2px; }
.buybar { background: #006b33; margin-left: -2px; }
.ind-close { position: absolute; right: 6px; top: 378px; width: 21px; height: 22px; background: #292929; border-radius: 3px; }
.hscroll { height: 21px; flex: none; display: flex; align-items: center; gap: 2px; padding: 0 6px 0 4px; }
.hscroll .back { border: 4px solid transparent; border-right: 8px solid #8a8a8a; border-left: 0; }
.hscroll .fwd { border: 4px solid transparent; border-left: 6px solid #8a8a8a; border-right: 0; }
.hscroll .thumb { width: 18px; height: 8px; border-radius: 4px; background: #8a8a8a; }
.splitter { position: absolute; left: 491px; bottom: -5px; display: flex; gap: 5px; align-items: center; }
.splitter i { width: 6px; height: 5px; background: #606060; }
.splitter b { border: 3px solid transparent; border-top: 4px solid #808080; border-bottom: 0; }
.tools { --bg: #525252; width: 34px; background: #525252; border-radius: 4px; padding: 0 3px 8px; display: flex; flex-direction: column; align-items: center; }
.hgrip { width: 17px; height: 4px; margin: 5px 0 0; }
.tools button { width: 28px; height: 28px; position: relative; }
.tools button.on::before { content: ""; position: absolute; inset: 3px 4px; background: #292929; border-radius: 3px; }
.tools svg { width: 16px; height: 16px; fill: none; stroke: #c8c8c8; stroke-width: 1; position: relative; }
.tools .on svg { stroke: none; }
.tools .sep { border-top: 1px solid #6a6a6a; }
.tools .more::after { content: ""; position: absolute; left: 4px; bottom: 3px; border: 2px solid #ddd; border-top-color: transparent; border-right-color: transparent; }

/* trades */
.trades { flex: none; display: flex; flex-direction: column; height: 338px; }
.tabs { display: flex; gap: 6px; height: 29px; align-items: flex-end; }
.tab { height: 29px; background: #3c3c3c; color: #d4d4d4; border-radius: 4px 4px 0 0; padding: 0 8px 2px 6px; }
.tab .grip { margin: 0 6px 2px 0; opacity: .6; }
.tab.on { --bg: #525252; background: #525252; color: #fff; }
.tab em { width: 18px; height: 16px; border-radius: 3px; background: #808080; color: #fff; font-weight: bold; margin-left: 6px; text-align: center; }
.tab.on em { background: #009345; font-weight: normal; }
.tab.wide { padding: 0 12px 2px 9px; }
.tab.fx { margin-right: 5px; }
.feedback { align-self: flex-start; height: 24px; padding: 0 5px; gap: 5px; background: #3c3c3c; color: #e0e0e0; border-radius: 4px; }
.trades-body { flex: 1; background: #525252; border-radius: 0 4px 4px 4px; display: flex; flex-direction: column; }
.filters { display: flex; gap: 6px; padding: 6px 6px 5px 7px; }
.dark-search { width: 202px; height: 22px; display: flex; align-items: center; padding: 0 3px; background: #292929; border-radius: 4px; color: #ccc; }
.dark-search input { flex: 1; }
.sel { position: relative; width: 129px; height: 22px; }
.sel select { appearance: none; width: 100%; height: 100%; background: #292929; border-radius: 4px; padding: 0 7px; outline: 0; }
.sel::after { content: ""; position: absolute; right: 6px; top: 8px; border: 3px solid transparent; border-top: 6px solid #808080; border-bottom: 0; }
.sel.big { width: 184px; height: 21px; }
.sel.big select { padding: 0 5px; }
.sel.big::after { border-top-color: #ccc; }
.green { height: 22px; background: #009345; border-radius: 3px; gap: 10px; padding: 0 6px 0 9px; }
.green.close { margin-left: 2px; width: 84px; padding: 0 6px 0 8px; gap: 10px; }
.green .caret { margin-left: auto; border-width: 7px 4px 0; border-top-color: #fff; }
.grid-box { flex: 1; margin: 0 6px 0 7px; background: #292929; border-radius: 4px; overflow: hidden; }
table { width: 100%; table-layout: fixed; border-collapse: collapse; }
.c84 { width: 84px; } .c94 { width: 94px; } .c82 { width: 82px; } .c117 { width: 117px; } .c176 { width: 176px; }
th, td { padding: 0 0 0 4px; text-align: center; font-weight: normal; }
th { height: 26px; color: #d0d0d0; position: relative; }
th::after { content: ""; position: absolute; right: 0; top: 4px; width: 1px; height: 18px; background: #505050; }
.nosep::after { content: none; }
td { height: 28px; }
td:first-child, td:last-child { padding: 0; }
tr + tr td:not(:first-child):not(:last-child) { border-top: 1px solid #484848; }
.acts { --hole: #494949; display: flex; gap: 4px; padding-left: 5px; }
.acts button { width: 22px; height: 22px; background: #494949; border-radius: 4px; color: #ccc; }
.acts .inf { font: italic bold 15px/20px "Liberation Serif", serif; }
.acts.red { gap: 5px; padding-left: 10px; }
.acts.red button { background: #f15a24; color: #fff; }
.warn { display: block; width: 15px; height: 16px; margin: 0 auto; border-radius: 3px; background: #26718f; color: #ccc; font-weight: bold; }
.account { height: 34px; display: flex; align-items: center; color: #d8d8d8; }
.account span { flex: 1; text-align: center; border-left: 1px solid #707070; line-height: 20px; white-space: nowrap; }
.account span:first-child { border-left-color: transparent; }
.account b { color: #fff; }
.account .neg { color: #ff6314; margin-left: 2px; }
.account button { --hole: #525252; width: 27px; color: #ccc; padding-right: 6px; }

/* right panel */
.right { width: 428px; flex: none; display: flex; flex-direction: column; position: relative; }
.collapse { position: absolute; left: -5px; top: 447px; display: flex; flex-direction: column; gap: 5px; }
.collapse i { width: 4px; height: 6px; background: #606060; }
.collapse b { border: 3px solid transparent; border-left: 4px solid #808080; border-right: 0; }
.rtabs { display: flex; gap: 6px; height: 29px; flex: none; }
.rtabs button { width: 56px; background: #3c3c3c; border-radius: 4px 4px 0 0; }
.rtabs .on { background: #525252; }
.rtabs .w { width: 64px; }
.rbody { flex: 1; min-height: 0; background: #525252; border-radius: 0 4px 4px 4px; padding: 6px 0 6px 6px; display: flex; flex-direction: column; gap: 6px; }
.rhead { display: flex; justify-content: space-between; padding-right: 7px; }
.rhead button { width: 21px; height: 21px; background: #6a6a6a; border-radius: 3px; }
.rscroll { flex: 1; min-height: 0; display: flex; }
.rlist { flex: 1; background: #292929; padding: 6px 6px 0 5px; border-radius: 4px 4px 0 0; overflow: hidden; position: relative; display: flex; flex-direction: column; gap: 6px; }
.rlist::after { content: ""; position: absolute; left: 0; right: 0; bottom: 0; height: 7px; background: linear-gradient(transparent, #111); }
.vscroll { width: 20px; flex: none; display: flex; flex-direction: column; align-items: center; padding: 6px 0; }
.vscroll .up { border: 4px solid transparent; border-bottom: 7px solid #808080; border-top: 0; }
.vscroll .thumb { width: 8px; height: 221px; margin: 6px 0 auto; border-radius: 4px; background: #808080; }
.vscroll .down { border: 4px solid transparent; border-top: 7px solid #808080; border-bottom: 0; }
.card { flex: none; background: #3c3c3c; border-radius: 4px; padding: 0 6px 5px; }
.card header { height: 32px; display: flex; align-items: center; padding-left: 8px; }
.card h2 { flex: 1; color: #d8d8d8; }
.card header button { width: 21px; height: 21px; background: #525252; border-radius: 3px; color: #ddd; }
.cal header { height: 33px; padding-left: 0; }
.cal .grip { height: 22px; width: 3px; margin-right: 9px; }
.inner { background: #292929; border-radius: 4px; padding: 0 11px 12px; display: flex; flex-direction: column; }
.name { height: 44px; display: flex; align-items: center; }
.name strong { margin-left: 10px; flex: 1; }
.name span { color: #1fa838; padding-right: 5px; }
.modes { display: flex; gap: 1px; height: 21px; }
.modes button { flex: 1; background: #494949; }
.modes button:first-child { border-radius: 4px 0 0 0; }
.modes button:last-child { border-radius: 0 4px 4px 0; }
.modes .on { background: #3a3a3a; border-bottom: 1px solid #00853e; }
.prices { display: flex; gap: 10px; margin: 17px 0 6px; height: 52px; }
.prices button { flex: 1; flex-direction: column; background: #1b1b1b; border-radius: 4px; border: 1px solid #292929; line-height: 15px; }
.prices b { font: bold 16px/18px "Liberation Sans", Arial, sans-serif; }
.prices .sell { color: #ff6314; }
.prices .buy { color: #1faf38; border-color: #1fa838; }
.depth { display: flex; gap: 2px; }
.depth i { flex: 1; height: 5px; border-radius: 3px; background: #f15a24; }
.depth i + i { background: #009345; }
.spread { line-height: 38px; text-align: center; }
.two { display: grid; grid-template-columns: 182px 1fr; }
.row input[type=checkbox] { appearance: none; width: 15px; height: 16px; background: #1b1b1b; border-radius: 3px; }
.mr, .stops > div { display: flex; gap: 4px; }
.info { margin-left: auto; width: 17px; height: 17px; border: 1px solid #808080; border-radius: 3px; color: #808080; font: italic 13px/13px "Liberation Serif", serif; }
.fields { margin-top: 6px; height: 21px; }
.fields > div { display: flex; gap: 6px; align-items: center; }
.num { width: 110px; height: 21px; display: flex; align-items: center; gap: 9px; padding: 0 5px; background: #1b1b1b; border-radius: 4px; }
.num input { flex: 1; }
.num .caret { border-top-color: #606060; }
.num.off { background: #222; color: #808080; }
.spin { width: 6px; height: 14px; position: relative; }
.spin::before, .spin::after { content: ""; position: absolute; left: 0; border: 3px solid transparent; }
.spin::before { top: 0; border-bottom: 6px solid #686868; border-top: 0; }
.spin::after { bottom: 0; border-top: 6px solid #686868; border-bottom: 0; }
.off .spin { opacity: .4; }
.soft { color: #c8c8c8; }
.stops { margin: 6px 0 19px; display: grid; grid-template-columns: 244px 1fr; }
textarea { height: 36px; background: #1b1b1b; border-radius: 3px; padding: 3px 5px; font-style: italic; resize: none; }
textarea::placeholder { color: #fff; }
.place { height: 21px; margin-top: 6px; background: #009345; border-radius: 3px; }
.cal .inner { padding-top: 4px; }
.ev { height: 100px; flex: none; padding: 8px 0 3px; border-bottom: 1px solid #484848; }
.ev.last { border-bottom-color: transparent; }
.when { height: 16px; display: flex; gap: 6px; padding-left: 1px; }
.when svg + span { margin-left: 1px; }
.when .t { color: #c8c8c8; }
.when .cur { margin-left: auto; display: flex; align-items: center; gap: 5px; width: 72px; height: 21px; color: #c8c8c8; }
.ev h3 { margin: 3px 0 4px; font-weight: bold; }
.cells { display: grid; grid-template-columns: repeat(4, 1fr); text-align: center; color: #c8c8c8; }
.cells > div:last-child { background: linear-gradient(#484848, #484848) 0 3px / 1px 44px no-repeat; }
.v { height: 28px; padding-top: 9px; margin-bottom: 5px; color: #fff; }
.bars { padding: 0; display: flex; gap: 6px; align-items: flex-end; justify-content: center; }
.bars i { width: 5px; height: 11px; background: #404040; }
.bars i:nth-child(2) { height: 20px; }
.bars i:nth-child(3) { height: 28px; }
.mid i:nth-child(-n+2) { background: #ff9900; }
.low i:first-child { background: #ffcc00; }

/* footer */
.foot { height: 20px; flex: none; display: flex; align-items: center; padding: 6px 5px 0 11px; white-space: nowrap; }
.dot { width: 5px; height: 5px; border-radius: 3px; background: #007a10; margin-right: 6px; }
.tz { margin: 0 14px 0 12px; }
.foot .caret { border-top-color: #606060; }
.bar { margin: 0 8px 0 10px; }
```
